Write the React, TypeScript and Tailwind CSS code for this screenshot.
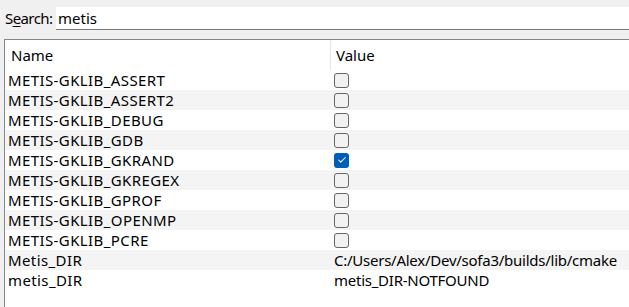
import { Check } from 'lucide-react';

interface Entry {
  name: string;
  value: boolean | string;
}

const entries: Entry[] = [
  { name: 'METIS-GKLIB_ASSERT', value: false },
  { name: 'METIS-GKLIB_ASSERT2', value: false },
  { name: 'METIS-GKLIB_DEBUG', value: false },
  { name: 'METIS-GKLIB_GDB', value: false },
  { name: 'METIS-GKLIB_GKRAND', value: true },
  { name: 'METIS-GKLIB_GKREGEX', value: false },
  { name: 'METIS-GKLIB_GPROF', value: false },
  { name: 'METIS-GKLIB_OPENMP', value: false },
  { name: 'METIS-GKLIB_PCRE', value: false },
  { name: 'Metis_DIR', value: 'C:/Users/Alex/Dev/sofa3/builds/lib/cmake' },
  { name: 'metis_DIR', value: 'metis_DIR-NOTFOUND' },
];

function CheckBox({ checked }: { checked: boolean }) {
  if (checked) {
    return (
      <span className="flex h-[15px] w-[15px] items-center justify-center rounded-[3px] bg-[#005fb8]">
        <Check className="h-[10px] w-[10px] text-white" strokeWidth={2.5} />
      </span>
    );
  }
  return <span className="block h-[15px] w-[15px] rounded-[3px] border border-[#666] bg-[#f2f2f2]" />;
}

export default function App() {
  return (
    <div className="h-[307px] w-[629px] overflow-hidden bg-[#f0f0f0] text-[15px] text-black" style={{ fontFamily: '"Noto Sans", "Segoe UI", sans-serif' }}>
      <div className="flex h-[30px] items-end pt-[7px]">
        <span className="w-[56px] self-center pl-[5px] leading-none tracking-[-0.6px]">
          S<span className="underline underline-offset-2">e</span>arch:
        </span>
        <div className="flex h-[23px] flex-1 items-center border-b border-[#7a7a7a] bg-white pl-[2px] leading-none">metis</div>
      </div>
      <div className="ml-[4px] mt-[9px] h-[268px] border-l border-t border-[#828790] bg-white">
        <div className="flex h-[30px] items-center">
          <div className="w-[325px] pl-[6px]">Name</div>
          <div className="h-full border-l border-[#e5e5e5]" />
          <div className="flex items-center pl-[5px]">Value</div>
        </div>
        {entries.map((e, i) => (
          <div key={e.name} className={`flex h-[20px] items-center leading-none ${i % 2 === 1 ? 'bg-[#f4f4f4]' : 'bg-white'}`}>
            <div className="w-[329px] pl-[3px] tracking-[0.4px]">{e.name}</div>
            <div className="flex items-center">
              {typeof e.value === 'boolean' ? (
                <CheckBox checked={e.value} />
              ) : (
                <span className="tracking-[-0.25px]">{e.value}</span>
              )}
            </div>
          </div>
        ))}
      </div>
    </div>
  );
}
